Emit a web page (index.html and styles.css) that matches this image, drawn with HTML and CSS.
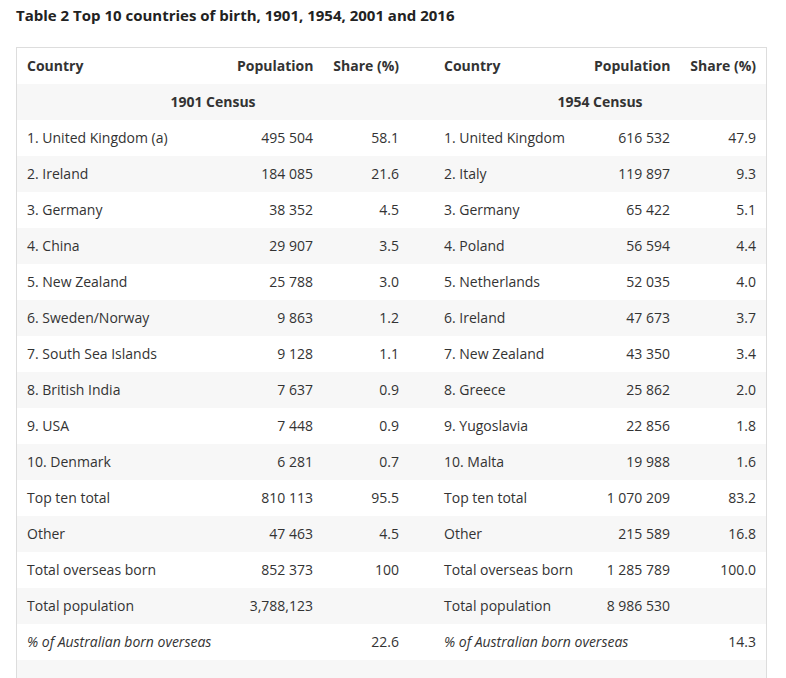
FILE: index.html
```html
<!DOCTYPE html>
<html lang="en">
<head>
<meta charset="utf-8">
<title>Table 2 Top 10 countries of birth</title>
<link rel="stylesheet" href="styles.css">
</head>
<body>
<div class="page">
  <h2 class="title">Table 2 Top 10 countries of birth, 1901, 1954, 2001 and 2016</h2>
  <div class="table-wrap">
    <table class="data">
      <colgroup>
        <col class="c-country1">
        <col class="c-pop">
        <col class="c-share">
        <col class="c-gap">
        <col class="c-country2">
        <col class="c-pop">
        <col class="c-share">
      </colgroup>
      <thead>
        <tr>
          <th class="l">Country</th><th class="r">Population</th><th class="r">Share (%)</th>
          <th></th>
          <th class="l">Country</th><th class="r">Population</th><th class="r">Share (%)</th>
        </tr>
      </thead>
      <tbody>
        <tr class="census">
          <th colspan="3">1901 Census</th><th></th><th colspan="3">1954 Census</th>
        </tr>
        <tr><td>1. United Kingdom (a)</td><td class="r">495 504</td><td class="r">58.1</td><td></td><td>1. United Kingdom</td><td class="r">616 532</td><td class="r">47.9</td></tr>
        <tr><td>2. Ireland</td><td class="r">184 085</td><td class="r">21.6</td><td></td><td>2. Italy</td><td class="r">119 897</td><td class="r">9.3</td></tr>
        <tr><td>3. Germany</td><td class="r">38 352</td><td class="r">4.5</td><td></td><td>3. Germany</td><td class="r">65 422</td><td class="r">5.1</td></tr>
        <tr><td>4. China</td><td class="r">29 907</td><td class="r">3.5</td><td></td><td>4. Poland</td><td class="r">56 594</td><td class="r">4.4</td></tr>
        <tr><td>5. New Zealand</td><td class="r">25 788</td><td class="r">3.0</td><td></td><td>5. Netherlands</td><td class="r">52 035</td><td class="r">4.0</td></tr>
        <tr><td>6. Sweden/Norway</td><td class="r">9 863</td><td class="r">1.2</td><td></td><td>6. Ireland</td><td class="r">47 673</td><td class="r">3.7</td></tr>
        <tr><td>7. South Sea Islands</td><td class="r">9 128</td><td class="r">1.1</td><td></td><td>7. New Zealand</td><td class="r">43 350</td><td class="r">3.4</td></tr>
        <tr><td>8. British India</td><td class="r">7 637</td><td class="r">0.9</td><td></td><td>8. Greece</td><td class="r">25 862</td><td class="r">2.0</td></tr>
        <tr><td>9. USA</td><td class="r">7 448</td><td class="r">0.9</td><td></td><td>9. Yugoslavia</td><td class="r">22 856</td><td class="r">1.8</td></tr>
        <tr><td>10. Denmark</td><td class="r">6 281</td><td class="r">0.7</td><td></td><td>10. Malta</td><td class="r">19 988</td><td class="r">1.6</td></tr>
        <tr><td>Top ten total</td><td class="r">810 113</td><td class="r">95.5</td><td></td><td>Top ten total</td><td class="r">1 070 209</td><td class="r">83.2</td></tr>
        <tr><td>Other</td><td class="r">47 463</td><td class="r">4.5</td><td></td><td>Other</td><td class="r">215 589</td><td class="r">16.8</td></tr>
        <tr><td>Total overseas born</td><td class="r">852 373</td><td class="r">100</td><td></td><td>Total overseas born</td><td class="r">1 285 789</td><td class="r">100.0</td></tr>
        <tr><td>Total population</td><td class="r">3,788,123</td><td class="r"></td><td></td><td>Total population</td><td class="r">8 986 530</td><td class="r"></td></tr>
        <tr class="pct"><td colspan="2"><em>% of Australian born overseas</em></td><td class="r">22.6</td><td></td><td colspan="2"><em>% of Australian born overseas</em></td><td class="r">14.3</td></tr>
        <tr class="blank"><td colspan="7"></td></tr>
      </tbody>
    </table>
  </div>
</div>
</body>
</html>
```

FILE: styles.css
```css
html, body {
  margin: 0;
  padding: 0;
  background: #fff;
}

body {
  font-family: "Open Sans", "Liberation Sans", Arial, sans-serif;
  color: #333;
}

.page {
  padding: 5px 19px 0 16px;
}

.title {
  margin: 0 0 22px;
  font-size: 15px;
  line-height: 20px;
  font-weight: 700;
  color: #222;
}

.table-wrap {
  border: 1px solid #ddd;
  width: 749px;
}

.data {
  width: 749px;
  border-collapse: collapse;
  table-layout: fixed;
  font-size: 14px;
}

.c-country1 { width: 210px; }
.c-pop { width: 96px; }
.c-share { width: 86px; }
.c-gap { width: 25px; }
.c-country2 { width: 150px; }

.data th,
.data td {
  height: 36px;
  padding: 0 10px;
  vertical-align: middle;
  white-space: nowrap;
  line-height: 20px;
  text-align: left;
}

.data th {
  font-weight: 700;
  color: #333;
}

.data .r {
  text-align: right;
}

.data tr.census th {
  text-align: center;
}

.data tbody tr:nth-child(odd) {
  background: #f7f7f7;
}

.data em {
  font-style: italic;
}
```
